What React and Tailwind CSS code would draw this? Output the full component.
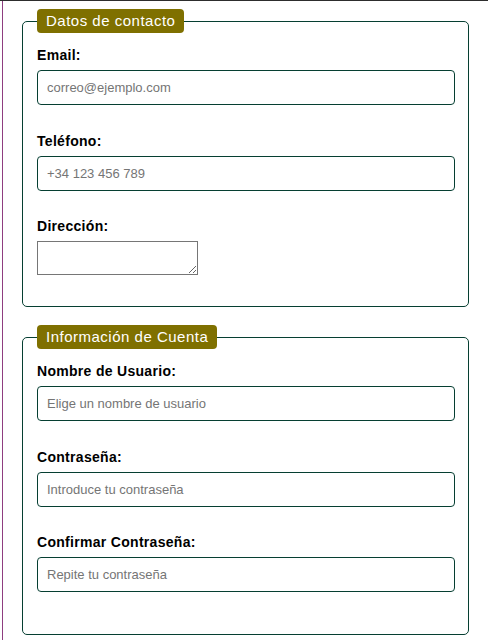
import React from 'react';

const inputCls =
    "block w-full h-[35px] border border-[#063f32] rounded-[4px] px-[9px] text-[13px] text-black bg-white placeholder:text-[#757575] outline-none";
const labelCls = "block text-[14px] leading-4 font-bold tracking-[0.3px] text-black mb-[7px]";
const legendCls =
    "ml-0 px-[9px] py-[3px] rounded-[4px] bg-[#7f7000] text-white text-[15px] leading-[18px] tracking-[0.5px]";
const fieldsetCls = "mx-[19px] border border-[#063f32] rounded-[5px] pl-[14px] pr-[13px] pt-[14px] pb-[14px]";

const Field = ({ id, label, type = 'text', placeholder, gap = "mb-[28px]" }) => (
    <div className={gap}>
        <label htmlFor={id} className={labelCls}>{label}</label>
        <input id={id} type={type} placeholder={placeholder} className={inputCls} />
    </div>
);

const App = () => {
    return (
        <div className="min-h-screen bg-white border-t border-[#2d2d2d] font-['Liberation_Sans',Arial,sans-serif]">
            <div className="ml-[2px] min-h-[639px] border-l border-[#8e3e80] pt-[8px] pb-[6px]">
                <fieldset className={fieldsetCls}>
                    <legend className={legendCls}>Datos de contacto</legend>
                    <Field id="email" label="Email:" type="email" placeholder="correo@ejemplo.com" />
                    <Field id="telefono" label="Teléfono:" type="tel" placeholder="+34 123 456 789" gap="mb-[27px]" />
                    <div className="mb-[17px]">
                        <label htmlFor="direccion" className={labelCls}>Dirección:</label>
                        <textarea id="direccion" className="block w-[161px] h-[34px] border border-[#767676] bg-white text-[13px]" />
                    </div>
                </fieldset>

                <fieldset className={`${fieldsetCls} mt-[18px]`}>
                    <legend className={legendCls}>Información de Cuenta</legend>
                    <Field id="usuario" label="Nombre de Usuario:" placeholder="Elige un nombre de usuario" />
                    <Field id="password" label="Contraseña:" type="password" placeholder="Introduce tu contraseña" gap="mb-[27px]" />
                    <Field id="confirm" label="Confirmar Contraseña:" type="password" placeholder="Repite tu contraseña" gap="mb-[28px]" />
                </fieldset>
            </div>
        </div>
    );
};

export default App;
